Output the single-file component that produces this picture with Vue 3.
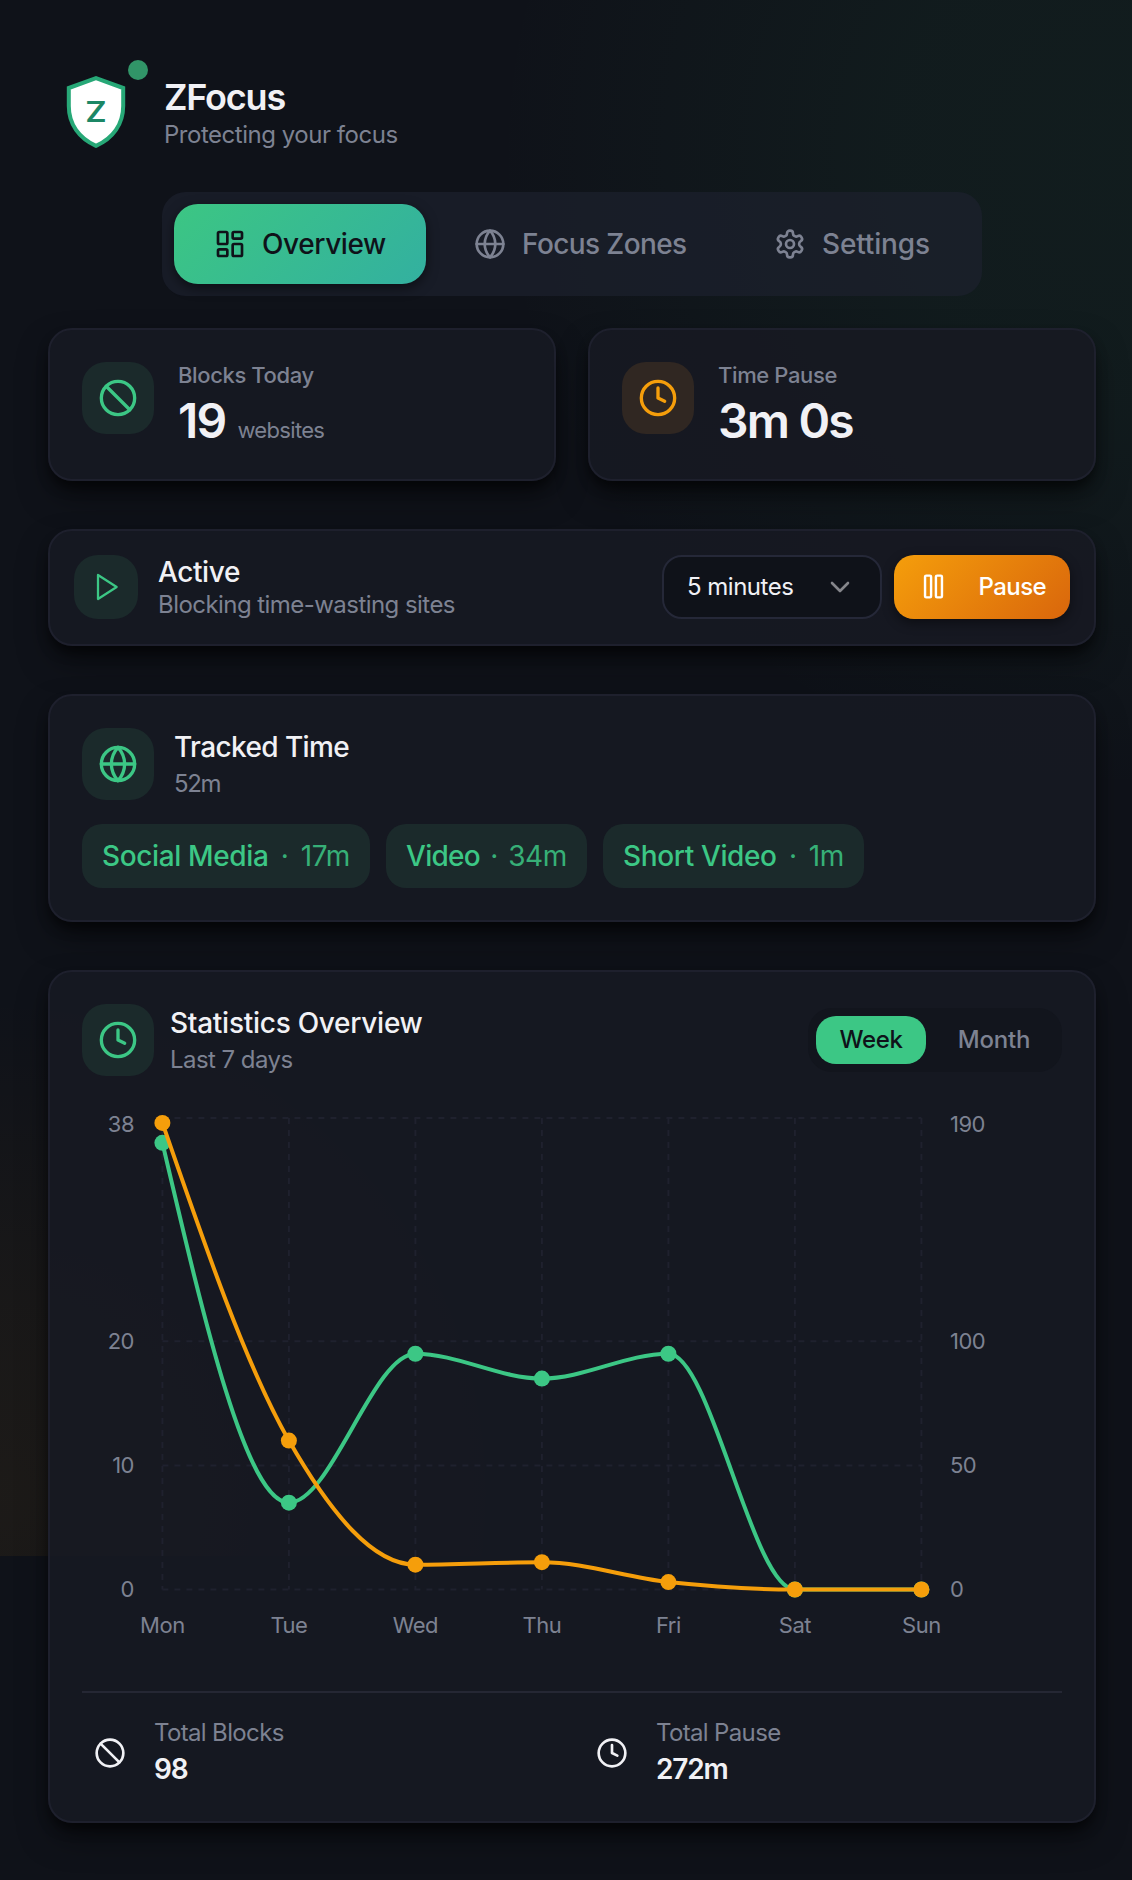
<template>
  <div class="popup">
    <div class="glow"></div>

    <header class="header">
      <div class="logo">
        <svg viewBox="0 0 96 96" width="96" height="96">
          <path
            d="M48 14.2 L20.8 24 V42 C20.8 60 31 74.5 48 81.8 C65 74.5 75.2 60 75.2 42 V24 Z"
            fill="#ffffff"
            stroke="#27a877"
            stroke-width="4"
          />
          <text class="logo-letter" x="37.3" y="57.8" textLength="21.4" lengthAdjust="spacingAndGlyphs">Z</text>
        </svg>
        <span class="status-dot"></span>
      </div>
      <div>
        <h1 class="brand">ZFocus</h1>
        <p class="tagline">Protecting your focus</p>
      </div>
    </header>

    <nav class="tabs">
      <button
        v-for="tab in tabs"
        :key="tab.id"
        class="tab"
        :class="[tab.id, { active: activeTab === tab.id }]"
        @click="activeTab = tab.id"
      >
        <svg class="icon" width="32" height="32" viewBox="0 0 24 24" v-html="icons[tab.icon]"></svg>
        <span>{{ tab.label }}</span>
      </button>
    </nav>

    <section class="stats">
      <div class="card stat">
        <div class="icon-box">
          <svg class="icon" width="40" height="40" viewBox="0 0 24 24" v-html="icons.ban"></svg>
        </div>
        <div>
          <div class="stat-label">Blocks Today</div>
          <div class="stat-value">
            <span>19</span><span class="unit">websites</span>
          </div>
        </div>
      </div>
      <div class="card stat">
        <div class="icon-box amber">
          <svg class="icon" width="40" height="40" viewBox="0 0 24 24" v-html="icons.clock"></svg>
        </div>
        <div>
          <div class="stat-label">Time Pause</div>
          <div class="stat-value">3m 0s</div>
        </div>
      </div>
    </section>

    <section class="card control">
      <div class="icon-box small">
        <svg class="icon" width="32" height="32" viewBox="0 0 24 24" v-html="icons.play"></svg>
      </div>
      <div class="control-text">
        <div class="title active-title">Active</div>
        <div class="subtitle">Blocking time-wasting sites</div>
      </div>
      <div class="select">
        <span>5 minutes</span>
        <svg width="20" height="12" viewBox="0 0 20 12">
          <path d="M2 2 L10 10 L18 2" fill="none" stroke="#85868b" stroke-width="2.6" stroke-linecap="round" stroke-linejoin="round" />
        </svg>
      </div>
      <button class="pause-btn">
        <svg class="icon" width="29" height="29" viewBox="0 0 24 24" v-html="icons.pause"></svg>
        <span>Pause</span>
      </button>
    </section>

    <section class="card tracked">
      <div class="card-head">
        <div class="icon-box">
          <svg class="icon" width="40" height="40" viewBox="0 0 24 24" v-html="icons.globe"></svg>
        </div>
        <div class="head-text">
          <div class="title tracked-title">Tracked Time</div>
          <div class="subtitle tracked-total">52m</div>
        </div>
      </div>
      <div class="chips">
        <div v-for="c in categories" :key="c.name" class="chip" :class="c.id">
          <span class="chip-name">{{ c.name }}</span>
          <span class="chip-sep">·</span>
          <span class="chip-time">{{ c.time }}</span>
        </div>
      </div>
    </section>

    <section class="card statistics">
      <div class="card-head stats-head">
        <div class="icon-box">
          <svg class="icon" width="40" height="40" viewBox="0 0 24 24" v-html="icons.clock"></svg>
        </div>
        <div class="head-text">
          <div class="title stats-title">Statistics Overview</div>
          <div class="subtitle">Last 7 days</div>
        </div>
        <div class="toggle">
          <button class="week" :class="{ on: range === 'week' }" @click="range = 'week'">Week</button>
          <button class="month" :class="{ on: range === 'month' }" @click="range = 'month'">Month</button>
        </div>
      </div>

      <svg class="chart" width="980" height="560" viewBox="0 0 980 560">
        <g class="grid">
          <line v-for="v in [0, 10, 20, 38]" :key="'h' + v" :x1="X0" :x2="X0 + STEP * 6" :y1="yFor(v, 38)" :y2="yFor(v, 38)" />
          <line v-for="(d, i) in days" :key="d" :x1="xFor(i)" :x2="xFor(i)" :y1="TOP" :y2="BOTTOM" />
        </g>
        <g class="axis">
          <text v-for="t in leftTicks" :key="'l' + t.label" x="52" :y="t.y" text-anchor="end">{{ t.label }}</text>
          <text v-for="t in rightTicks" :key="'r' + t.label" x="868" :y="t.y">{{ t.label }}</text>
          <text v-for="(d, i) in days" :key="'d' + d" :x="xFor(i)" y="533" text-anchor="middle">{{ d }}</text>
        </g>
        <g v-for="s in series" :key="s.id" :class="s.id">
          <path class="line" :d="s.path" />
          <circle v-for="(p, i) in s.points" :key="i" :cx="p[0]" :cy="p[1]" r="8" />
        </g>
      </svg>

      <div class="totals">
        <div class="total">
          <svg class="icon" width="32" height="32" viewBox="0 0 24 24" v-html="icons.ban"></svg>
          <div>
            <div class="total-label">Total Blocks</div>
            <div class="total-value">98</div>
          </div>
        </div>
        <div class="total">
          <svg class="icon" width="32" height="32" viewBox="0 0 24 24" v-html="icons.clock"></svg>
          <div>
            <div class="total-label">Total Pause</div>
            <div class="total-value">272m</div>
          </div>
        </div>
      </div>
    </section>
  </div>
</template>

<script setup>
import { ref } from 'vue'

const activeTab = ref('overview')
const range = ref('week')

const tabs = [
  { id: 'overview', label: 'Overview', icon: 'dashboard' },
  { id: 'zones', label: 'Focus Zones', icon: 'globe' },
  { id: 'settings', label: 'Settings', icon: 'gear' }
]

const categories = [
  { id: 'social', name: 'Social Media', time: '17m' },
  { id: 'video', name: 'Video', time: '34m' },
  { id: 'short', name: 'Short Video', time: '1m' }
]

const icons = {
  dashboard:
    '<rect x="3" y="3" width="7" height="9" rx="1"/><rect x="14" y="3" width="7" height="5" rx="1"/><rect x="14" y="12" width="7" height="9" rx="1"/><rect x="3" y="16" width="7" height="5" rx="1"/>',
  globe:
    '<circle cx="12" cy="12" r="10"/><path d="M2 12h20"/><path d="M12 2a15.3 15.3 0 0 1 4 10 15.3 15.3 0 0 1-4 10 15.3 15.3 0 0 1-4-10 15.3 15.3 0 0 1 4-10z"/>',
  gear:
    '<path d="M12.22 2h-.44a2 2 0 0 0-2 2v.18a2 2 0 0 1-1 1.73l-.43.25a2 2 0 0 1-2 0l-.15-.08a2 2 0 0 0-2.73.73l-.22.38a2 2 0 0 0 .73 2.73l.15.1a2 2 0 0 1 1 1.72v.51a2 2 0 0 1-1 1.74l-.15.09a2 2 0 0 0-.73 2.73l.22.38a2 2 0 0 0 2.73.73l.15-.08a2 2 0 0 1 2 0l.43.25a2 2 0 0 1 1 1.73V20a2 2 0 0 0 2 2h.44a2 2 0 0 0 2-2v-.18a2 2 0 0 1 1-1.73l.43-.25a2 2 0 0 1 2 0l.15.08a2 2 0 0 0 2.73-.73l.22-.39a2 2 0 0 0-.73-2.73l-.15-.08a2 2 0 0 1-1-1.74v-.5a2 2 0 0 1 1-1.74l.15-.09a2 2 0 0 0 .73-2.73l-.22-.38a2 2 0 0 0-2.73-.73l-.15.08a2 2 0 0 1-2 0l-.43-.25a2 2 0 0 1-1-1.73V4a2 2 0 0 0-2-2z"/><circle cx="12" cy="12" r="3"/>',
  ban: '<circle cx="12" cy="12" r="10"/><path d="m4.93 4.93 14.14 14.14"/>',
  clock: '<circle cx="12" cy="12" r="10"/><path d="M12 6v6l4 2"/>',
  play: '<path d="M6 3l14 9-14 9z"/>',
  pause: '<rect x="14" y="3" width="5" height="18" rx="1"/><rect x="5" y="3" width="5" height="18" rx="1"/>'
}

// Chart geometry
const X0 = 80.4
const STEP = 126.5
const TOP = 18
const BOTTOM = 489.5

const days = ['Mon', 'Tue', 'Wed', 'Thu', 'Fri', 'Sat', 'Sun']

const xFor = (i) => X0 + STEP * i
const yFor = (v, max) => BOTTOM - (v / max) * (BOTTOM - TOP)

const tickY = (v, max) => (v === max ? TOP + 14 : yFor(v, max) + 7.5)
const leftTicks = [38, 20, 10, 0].map((v) => ({ label: v, y: tickY(v, 38) }))
const rightTicks = [190, 100, 50, 0].map((v) => ({ label: v, y: tickY(v, 190) }))

// Monotone cubic interpolation
const monotonePath = (pts) => {
  const n = pts.length
  const slope = []
  for (let i = 0; i < n - 1; i++) {
    slope.push((pts[i + 1][1] - pts[i][1]) / STEP)
  }
  const m = pts.map((_, i) => {
    if (i === 0 || i === n - 1) return 0
    const a = slope[i - 1]
    const b = slope[i]
    if (a * b <= 0) return 0
    return Math.sign(a) * 2 * Math.min(Math.abs(a), Math.abs(b), Math.abs(a + b) / 4)
  })
  m[0] = (3 * slope[0] - m[1]) / 2
  m[n - 1] = (3 * slope[n - 2] - m[n - 2]) / 2
  const dx = STEP / 3
  let d = `M${pts[0][0]},${pts[0][1]}`
  for (let i = 0; i < n - 1; i++) {
    const [x1, y1] = pts[i]
    const [x2, y2] = pts[i + 1]
    d += `C${x1 + dx},${y1 + dx * m[i]},${x2 - dx},${y2 - dx * m[i + 1]},${x2},${y2}`
  }
  return d
}

const makeSeries = (id, values, max) => {
  const points = values.map((v, i) => [xFor(i), yFor(v, max)])
  return { id, points, path: monotonePath(points) }
}

const series = [
  makeSeries('blocks', [36, 7, 19, 17, 19, 0, 0], 38),
  makeSeries('paused', [188, 60, 10, 11, 3, 0, 0], 190)
]
</script>

<style>
body {
  margin: 0;
  background: #0f1219;
}
</style>

<style scoped>
.popup {
  position: relative;
  box-sizing: border-box;
  width: 1132px;
  height: 1880px;
  padding: 64px 36px 0 48px;
  overflow: hidden;
  background: #0f1219;
  color: #f1f1f5;
  font-family: Inter, sans-serif;
}

.glow {
  position: absolute;
  top: 0;
  left: 0;
  width: 1132px;
  height: 1556px;
  background:
    radial-gradient(circle at 100% 10%, rgba(60, 199, 110, 0.06), rgba(60, 199, 110, 0.05) 240px, transparent 640px),
    radial-gradient(circle at 0 96%, rgba(245, 158, 11, 0.06), rgba(245, 158, 11, 0.045) 200px, transparent 500px);
}

.header,
.tabs,
.stats,
.card {
  position: relative;
  box-sizing: border-box;
}

.icon {
  display: block;
  flex: none;
  fill: none;
  stroke: currentColor;
  stroke-width: 2;
  stroke-linecap: round;
  stroke-linejoin: round;
}

button {
  border: 0;
  padding: 0;
  background: none;
  color: inherit;
  font: inherit;
}

/* Header */
.header {
  display: flex;
  align-items: center;
  gap: 20px;
  height: 96px;
}

.logo {
  position: relative;
  width: 96px;
  height: 96px;
}

.logo-letter {
  font-size: 28px;
  font-weight: 600;
  fill: #1c8765;
}

.status-dot {
  position: absolute;
  top: -4px;
  right: -4px;
  width: 20px;
  height: 20px;
  border-radius: 50%;
  background: #319568;
}

.brand {
  margin: 0;
  font-size: 36px;
  line-height: 45px;
  font-weight: 600;
  letter-spacing: -1.2px;
}

.tagline {
  margin: 0;
  font-size: 24px;
  line-height: 30px;
  letter-spacing: -0.47px;
  color: #7d8292;
}

/* Tabs */
.tabs {
  display: flex;
  gap: 8px;
  width: 820px;
  height: 104px;
  margin: 32px 0 0 114px;
  padding: 12px;
  border-radius: 24px;
  background: rgba(29, 33, 45, 0.7);
}

.tab {
  display: flex;
  align-items: center;
  gap: 16px;
  box-sizing: border-box;
  height: 80px;
  padding: 0 0 1px 40px;
  border-radius: 24px;
  color: #7d8292;
  font-size: 28px;
  font-weight: 500;
  white-space: nowrap;
}

.tab.overview {
  width: 252px;
  letter-spacing: -0.4px;
}

.tab.zones {
  width: 292px;
  letter-spacing: -0.6px;
}

.tab.settings {
  width: 236px;
  letter-spacing: -0.15px;
}

.tab.active {
  background: linear-gradient(135deg, #3cc683, #33b0a0);
  color: #0f1219;
  box-shadow: 0 4px 12px rgba(0, 0, 0, 0.5);
}

/* Cards */
.card {
  border: 2px solid #1e202d;
  border-radius: 24px;
  background: rgba(23, 25, 34, 0.88);
  box-shadow: 0 8px 12px -2px rgba(0, 0, 0, 0.5), 0 16px 32px -4px rgba(0, 0, 0, 0.5);
}

.icon-box {
  display: flex;
  align-items: center;
  justify-content: center;
  flex: none;
  width: 72px;
  height: 72px;
  border-radius: 24px;
  background: #1b2a2b;
  color: #3cc785;
}

.icon-box.small {
  width: 64px;
  height: 64px;
}

.icon-box.small .icon {
  stroke-width: 1.7;
}

.icon-box.amber {
  background: #302722;
  color: #f59e0b;
}

.title {
  font-size: 28px;
  line-height: 35px;
  font-weight: 500;
  white-space: nowrap;
}

.active-title { letter-spacing: -0.4px; }
.tracked-title { letter-spacing: -0.6px; }
.stats-title { letter-spacing: -0.27px; }

.subtitle {
  font-size: 24px;
  line-height: 30px;
  letter-spacing: -0.55px;
  color: #7d8292;
  white-space: nowrap;
}

.tracked-total { letter-spacing: -1.4px; }

/* Stat cards */
.stats {
  display: grid;
  grid-template-columns: 508px 508px;
  gap: 32px;
  margin-top: 32px;
}

.stat {
  display: flex;
  gap: 24px;
  height: 153px;
  padding: 32px;
}

.stat-label {
  margin-bottom: 6px;
  font-size: 22px;
  line-height: 27px;
  font-weight: 500;
  letter-spacing: -0.38px;
  color: #7d8292;
}

.stat-value {
  display: flex;
  align-items: baseline;
  gap: 12px;
  font-size: 48px;
  line-height: 52px;
  font-weight: 600;
  letter-spacing: -1.8px;
}

.unit {
  font-size: 22px;
  font-weight: 400;
  letter-spacing: -0.67px;
  color: #7d8292;
}

/* Pause control */
.control {
  display: flex;
  align-items: flex-start;
  width: 1048px;
  height: 117px;
  margin-top: 48px;
  padding: 24px;
}

.control-text {
  margin-left: 20px;
}

.select {
  display: flex;
  align-items: center;
  justify-content: space-between;
  box-sizing: border-box;
  width: 220px;
  height: 64px;
  margin-left: auto;
  padding: 0 30px 1px 23px;
  border: 2px solid #252838;
  border-radius: 20px;
  background: #0f1219;
  font-size: 24px;
  letter-spacing: -0.5px;
}

.pause-btn {
  display: flex;
  align-items: center;
  justify-content: space-between;
  box-sizing: border-box;
  width: 176px;
  height: 64px;
  margin-left: 12px;
  padding: 0 24px 1px 25px;
  border-radius: 20px;
  background: linear-gradient(135deg, #f59e0b, #d9660c);
  color: #ffffff;
  font-size: 24px;
  font-weight: 500;
  letter-spacing: -0.6px;
  box-shadow: 0 4px 12px rgba(0, 0, 0, 0.45);
}

/* Tracked time */
.tracked {
  width: 1048px;
  height: 228px;
  margin-top: 48px;
  padding: 32px;
}

.card-head {
  display: flex;
  align-items: center;
  gap: 20px;
}

.head-text .title {
  margin-bottom: 4px;
}

.chips {
  display: flex;
  gap: 16px;
  margin-top: 24px;
}

.chip {
  display: flex;
  align-items: center;
  justify-content: space-between;
  box-sizing: border-box;
  height: 64px;
  padding: 0 20px 1px;
  border-radius: 20px;
  background: #1b2a2b;
  color: #3cc785;
  font-size: 28px;
  font-weight: 500;
  letter-spacing: -0.37px;
  white-space: nowrap;
}

.chip.social { width: 288px; }
.chip.video { width: 201px; }
.chip.short { width: 261px; }

.chip.video .chip-name {
  letter-spacing: -0.7px;
}

.chip-sep,
.chip-time {
  font-weight: 400;
  opacity: 0.85;
}

/* Statistics */
.statistics {
  width: 1048px;
  height: 853px;
  margin-top: 48px;
  padding: 32px;
}

.stats-head {
  gap: 16px;
}

.toggle {
  display: flex;
  gap: 8px;
  box-sizing: border-box;
  width: 254px;
  height: 64px;
  margin-left: auto;
  padding: 8px;
  border-radius: 24px;
  background: #12151d;
}

.toggle button {
  height: 48px;
  padding-bottom: 1px;
  border-radius: 20px;
  color: #7d8292;
  font-size: 24px;
  font-weight: 500;
  letter-spacing: -0.4px;
}

.toggle .week { width: 110px; }

.toggle .month {
  width: 120px;
  letter-spacing: -0.2px;
}

.toggle button.on {
  background: #3cc785;
  color: #0f1219;
}

.chart {
  display: block;
  margin-top: 24px;
}

.grid line {
  stroke: #1f212e;
  stroke-width: 2;
  stroke-dasharray: 6 6;
}

.axis text {
  fill: #7d8292;
  font-size: 22px;
  letter-spacing: -0.5px;
}

.line {
  fill: none;
  stroke-width: 4;
}

.blocks .line { stroke: #3cc785; }
.blocks circle { fill: #3cc785; }
.paused .line { stroke: #f59e0b; }
.paused circle { fill: #f59e0b; }

.totals {
  display: grid;
  grid-template-columns: 1fr 1fr;
  gap: 24px;
  margin-top: 31px;
  padding-top: 25px;
  border-top: 2px solid #252734;
}

.total {
  display: flex;
  align-items: center;
  gap: 28px;
  padding-left: 12px;
}

.total-label {
  margin-bottom: 4px;
  font-size: 24px;
  line-height: 30px;
  letter-spacing: -0.65px;
  color: #7d8292;
}

.total-value {
  font-size: 28px;
  line-height: 35px;
  font-weight: 600;
  letter-spacing: -1.2px;
}
</style>
